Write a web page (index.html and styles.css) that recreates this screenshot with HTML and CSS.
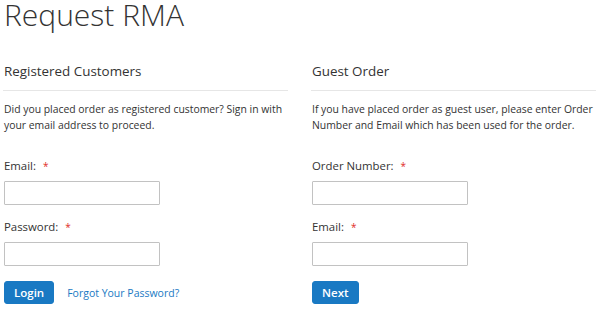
FILE: index.html
```html
<!DOCTYPE html>
<html lang="en">
<head>
    <meta charset="UTF-8">
    <meta name="viewport" content="width=device-width, initial-scale=1.0">
    <title>Request RMA</title>
    <link rel="stylesheet" href="styles.css">
</head>
<body>

    <div class="page">
        <h1 class="page-title">Request RMA</h1>

        <div class="columns">
            <div class="block">
                <h2 class="block-title">Registered Customers</h2>
                <p class="note">Did you placed order as registered customer? Sign in with your email address to proceed.</p>
                <form class="form" onsubmit="return false">
                    <div class="field">
                        <label for="login-email">Email: <span class="req">*</span></label>
                        <input type="text" id="login-email" class="input-text" />
                    </div>
                    <div class="field">
                        <label for="login-pass">Password: <span class="req">*</span></label>
                        <input type="password" id="login-pass" class="input-text" />
                    </div>
                    <div class="actions">
                        <button class="primary">Login</button>
                        <a href="#" class="remind">Forgot Your Password?</a>
                    </div>
                </form>
            </div>

            <div class="block">
                <h2 class="block-title">Guest Order</h2>
                <p class="note">If you have placed order as guest user, please enter Order Number and Email which has been used for the order.</p>
                <form class="form" onsubmit="return false">
                    <div class="field">
                        <label for="order-id">Order Number: <span class="req">*</span></label>
                        <input type="text" id="order-id" class="input-text" />
                    </div>
                    <div class="field">
                        <label for="guest-email">Email: <span class="req">*</span></label>
                        <input type="text" id="guest-email" class="input-text" />
                    </div>
                    <div class="actions">
                        <button class="primary">Next</button>
                    </div>
                </form>
            </div>
        </div>
    </div>

</body>
</html>
```

FILE: styles.css
```css
body {
    font-family: "Open Sans", Arial, sans-serif;
    margin: 0;
    background-color: #fff;
    color: #333;
}
.page {
    padding: 0 5px 0 3px;
}
.page-title {
    font-size: 30px;
    font-weight: 300;
    line-height: 29px;
    margin: 0 0 33px 1px;
    padding-bottom: 0;
}
.columns {
    display: grid;
    grid-template-columns: 1fr 1fr;
    grid-gap: 23px;
}
.block-title {
    font-size: 13.4px;
    font-weight: 400;
    line-height: 18px;
    margin: 0;
    padding: 0 0 10px 1px;
    border-bottom: 1px solid #e6e6e6;
}
.note {
    font-size: 10.4px;
    line-height: 16px;
    margin: 10px 0 25px 1px;
}
.field {
    margin-bottom: 14px;
}
.field label {
    display: block;
    font-size: 11.4px;
    font-weight: 400;
    line-height: 16px;
    margin: 0 0 7px 1px;
}
.req {
    color: #e02b27;
    font-size: 10px;
    margin-left: 4px;
}
.input-text {
    display: block;
    width: 156px;
    height: 24px;
    box-sizing: border-box;
    margin-left: 1px;
    border: 1px solid #c2c2c2;
    border-radius: 1px;
    background: #fff;
}
.actions {
    display: flex;
    align-items: center;
    margin-top: 15px;
    padding-left: 1px;
}
.primary {
    font-family: inherit;
    font-size: 11.5px;
    font-weight: 600;
    height: 23px;
    padding: 0 9px;
    border: 1px solid #1979c3;
    border-radius: 3px;
    background-color: #1979c3;
    color: #fff;
    cursor: pointer;
}
.primary:hover {
    background-color: #006bb4;
}
.remind {
    font-size: 10.5px;
    color: #1979c3;
    text-decoration: none;
    margin-left: 13px;
}
```
